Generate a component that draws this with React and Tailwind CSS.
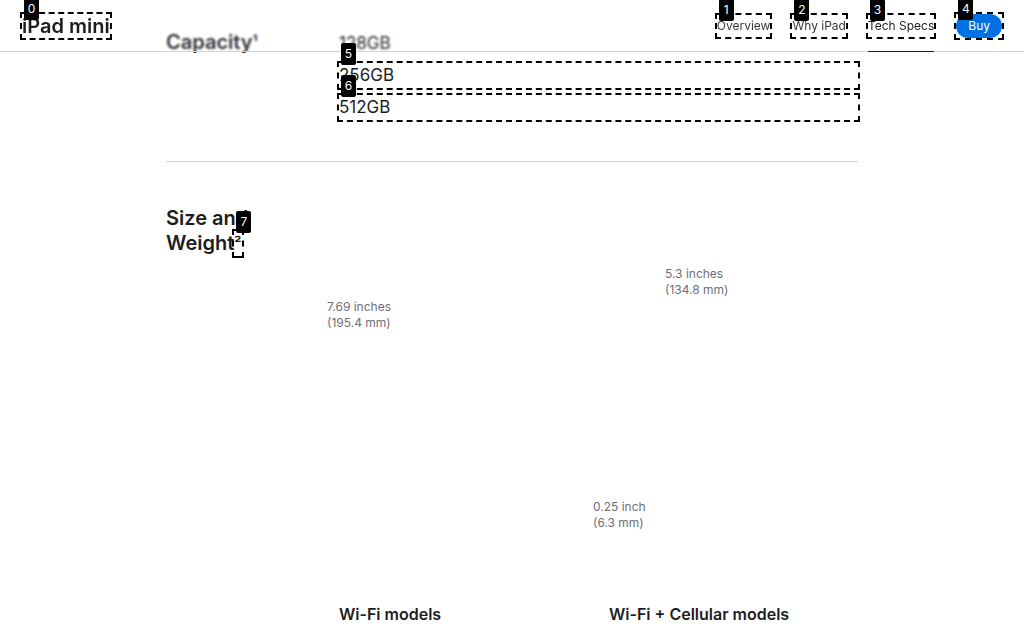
function Mark({ n, top = false }) {
  return (
    <span aria-hidden="true" className="pointer-events-none absolute -inset-[2px] border-2 border-dashed border-black">
      <span
        className={`absolute left-[2px] z-30 flex h-[22px] w-[15px] items-center justify-center rounded-xs bg-black text-xs font-normal text-white ${
          top ? "-top-4" : "-top-5"
        }`}
      >
        {n}
      </span>
    </span>
  );
}

const links = [
  { label: "Overview", n: 1, tone: "text-[#1d1d1f]/90" },
  { label: "Why iPad", n: 2, tone: "text-[#1d1d1f]/90" },
  { label: "Tech Specs", n: 3, tone: "text-[#1d1d1f]", current: true },
];

function Header() {
  return (
    <header className="fixed inset-x-0 top-0 z-20 flex h-[52px] items-center justify-between border-b border-[#d2d2d7] bg-white/10 px-[22px] backdrop-blur-[1px]">
      <a href="#ipad-mini" className="relative text-xl leading-6 font-semibold text-[#1d1d1f]">
        iPad mini
        <Mark n={0} top />
      </a>
      <nav className="flex items-center gap-[22px] text-xs">
        {links.map((link) => (
          <div key={link.n} className="relative flex h-[52px] items-center">
            <a
              href={`#section-${link.n}`}
              aria-current={link.current ? "page" : undefined}
              className={`relative leading-[22px] whitespace-nowrap ${link.tone}`}
            >
              {link.label}
              <Mark n={link.n} top />
            </a>
            {link.current && <span className="absolute inset-x-0 bottom-0 h-px bg-[#1d1d1f]" />}
          </div>
        ))}
        <a href="#buy" className="relative rounded-full bg-[#0071e3] px-3 leading-6 text-white">
          Buy
          <Mark n={4} top />
        </a>
      </nav>
    </header>
  );
}

function Dimension({ imperial, metric, className }) {
  return (
    <p className={`text-xs leading-4 text-[#6e6e73] ${className}`}>
      {imperial}
      <br />
      {metric}
    </p>
  );
}

export default function App() {
  return (
    <div className="min-h-screen bg-white font-['Inter',sans-serif] text-[#1d1d1f]">
      <Header />
      <main className="mx-auto max-w-[692px] pt-[30px]">
        <section className="grid grid-cols-[1fr_3fr] border-b border-[#d2d2d7] pb-[41px]">
          <h2 className="text-xl leading-[25px] font-semibold">
            Capacity<span className="inline-block align-top text-base leading-[25px]">¹</span>
          </h2>
          <ul className="flex flex-col gap-[7px] pt-px text-[17px] leading-[25px]">
            <li>128GB</li>
            <li className="relative">
              256GB
              <Mark n={5} />
            </li>
            <li className="relative">
              512GB
              <Mark n={6} />
            </li>
          </ul>
        </section>
        <section className="grid grid-cols-[1fr_3fr] pt-[44px]">
          <h2 className="text-xl leading-[25px] font-semibold">
            Size and
            <br />
            Weight
            <a href="#footnote-2" className="relative inline-block align-top text-base leading-[25px]">
              ²<Mark n={7} />
            </a>
          </h2>
          <div>
            <div className="grid grid-cols-[254px_1fr] pt-[60px]">
              <Dimension imperial="7.69 inches" metric="(195.4 mm)" className="-ml-3 pt-[33px]" />
              <div>
                <Dimension imperial="5.3 inches" metric="(134.8 mm)" className="pl-[72px]" />
                <Dimension imperial="0.25 inch" metric="(6.3 mm)" className="pt-[201px]" />
              </div>
            </div>
            <div className="grid grid-cols-[270px_1fr] pt-[71px] text-base leading-[25px] font-semibold">
              <h3>Wi-Fi models</h3>
              <h3>Wi-Fi + Cellular models</h3>
            </div>
          </div>
        </section>
      </main>
    </div>
  );
}
